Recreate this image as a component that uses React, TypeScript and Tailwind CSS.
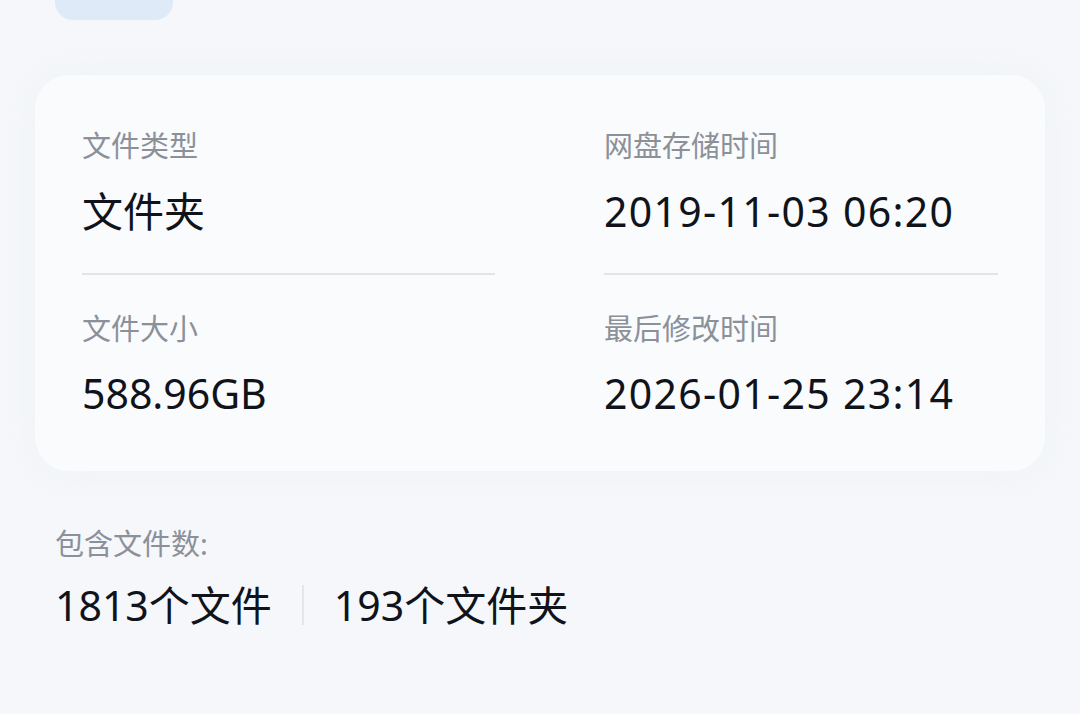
const font = { fontFamily: '"Noto Sans", "Noto Sans CJK SC", sans-serif' };

type Field = { label: string; value: string; wide?: boolean };

const left: Field[] = [
  { label: "文件类型", value: "文件夹" },
  { label: "文件大小", value: "588.96GB" },
];

const right: Field[] = [
  { label: "网盘存储时间", value: "2019-11-03 06:20", wide: true },
  { label: "最后修改时间", value: "2026-01-25 23:14", wide: true },
];

function Column({ fields, width }: { fields: Field[]; width: string }) {
  return (
    <div className={`flex flex-col ${width}`}>
      {/* first field */}
      <div className="text-[29px] leading-[40px] text-[#8b9099]">{fields[0].label}</div>
      <div
        className={`mt-[17px] text-[41px] leading-[56px] text-[#10131a] ${fields[0].wide ? "tracking-[1.3px]" : ""}`}
      >
        {fields[0].value}
      </div>
      <div className="mt-[34px] h-[2px] w-full bg-[#e2e4e8]" />
      {/* second field */}
      <div className="mt-[34px] text-[29px] leading-[40px] text-[#8b9099]">{fields[1].label}</div>
      <div
        className={`mt-[16px] text-[41px] leading-[56px] text-[#10131a] ${fields[1].wide ? "tracking-[1.3px]" : ""}`}
      >
        {fields[1].value}
      </div>
    </div>
  );
}

export default function App() {
  return (
    <div className="h-[714px] w-[1080px] overflow-hidden bg-[#f5f7fa]" style={font}>
      {/* cut-off button at top */}
      <div className="ml-[55px] h-[20px] w-[118px] rounded-b-[18px] bg-[#deeaf7]" />

      {/* details card */}
      <div className="ml-[35px] mt-[55px] flex w-[1010px] gap-[109px] rounded-[34px] bg-[#f9fbfd] pb-[50px] pl-[47px] pr-[47px] pt-[51px] shadow-[0_0_30px_rgba(230,234,242,0.3)]">
        <Column fields={left} width="w-[413px]" />
        <Column fields={right} width="w-[394px]" />
      </div>

      {/* file counts */}
      <div className="ml-[55px] mt-[53px] flex flex-col">
        <div className="text-[29px] leading-[40px] text-[#8b9099]">包含文件数:</div>
        <div className="mt-[13px] flex items-center text-[41px] leading-[56px] text-[#10131a]">
          <span>1813个文件</span>
          <span className="mx-[30px] h-[40px] w-[2px] bg-[#e4e6ea]" />
          <span>193个文件夹</span>
        </div>
      </div>
    </div>
  );
}
